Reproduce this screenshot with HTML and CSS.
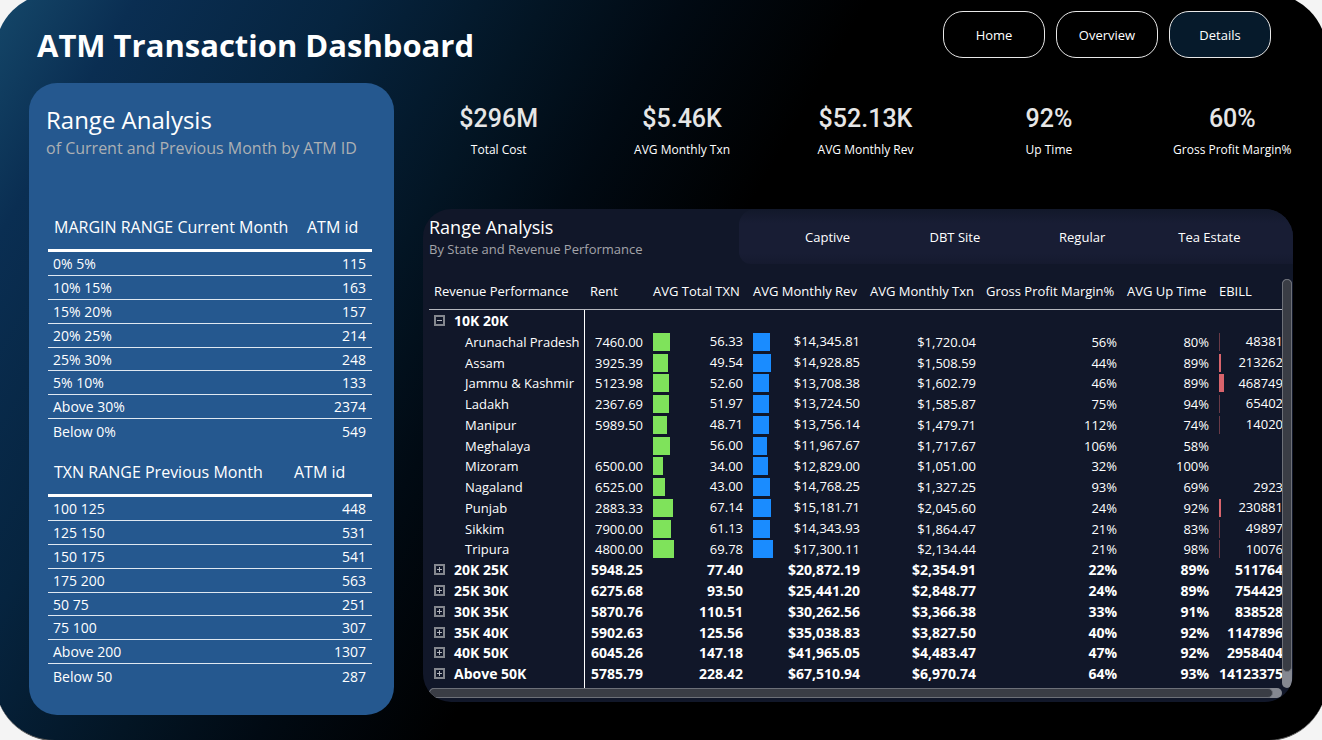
FILE: index.html
```html
<!DOCTYPE html>
<html lang="en">
<head>
<meta charset="utf-8">
<meta name="viewport" content="width=device-width, initial-scale=1">
<title>ATM Transaction Dashboard</title>
<link rel="stylesheet" href="styles.css">
</head>
<body>
<svg class="sprite" aria-hidden="true">
  <symbol id="plus" viewBox="0 0 11 11"><path d="M1 1h9v9H1z" fill="none" stroke="currentColor" stroke-width="2"/><path d="M3 5.500h5M5.500 3v5" fill="none" stroke="#b4b6bd"/></symbol>
  <symbol id="minus" viewBox="0 0 11 11"><path d="M1 1h9v9H1z" fill="none" stroke="currentColor" stroke-width="2"/><path d="M3 5.500h5" fill="none" stroke="#b4b6bd"/></symbol>
</svg>
<div class="board">
  <header class="top">
    <h1>ATM Transaction Dashboard</h1>
    <nav class="tabs">
      <button type="button" class="tab">Home</button>
      <button type="button" class="tab">Overview</button>
      <button type="button" class="tab tab-active">Details</button>
    </nav>
  </header>
  <main class="content">
    <section class="side">
      <h2>Range Analysis</h2>
      <p class="sub">of Current and Previous Month by ATM ID</p>
      <table class="ranges">
        <colgroup><col class="w-range"><col></colgroup>
        <thead><tr><th>MARGIN RANGE Current Month</th><th>ATM id</th></tr></thead>
        <tbody>
          <tr><td>0% 5%</td><td>115</td></tr>
          <tr><td>10% 15%</td><td>163</td></tr>
          <tr><td>15% 20%</td><td>157</td></tr>
          <tr><td>20% 25%</td><td>214</td></tr>
          <tr><td>25% 30%</td><td>248</td></tr>
          <tr><td>5% 10%</td><td>133</td></tr>
          <tr><td>Above 30%</td><td>2374</td></tr>
          <tr><td>Below 0%</td><td>549</td></tr>
        </tbody>
      </table>
      <table class="ranges">
        <colgroup><col class="w-txn"><col></colgroup>
        <thead><tr><th>TXN RANGE Previous Month</th><th>ATM id</th></tr></thead>
        <tbody>
          <tr><td>100 125</td><td>448</td></tr>
          <tr><td>125 150</td><td>531</td></tr>
          <tr><td>150 175</td><td>541</td></tr>
          <tr><td>175 200</td><td>563</td></tr>
          <tr><td>50 75</td><td>251</td></tr>
          <tr><td>75 100</td><td>307</td></tr>
          <tr><td>Above 200</td><td>1307</td></tr>
          <tr><td>Below 50</td><td>287</td></tr>
        </tbody>
      </table>
    </section>
    <div class="detail">
      <dl class="kpis">
        <div><dd>$296M</dd><dt>Total Cost</dt></div>
        <div><dd>$5.46K</dd><dt>AVG Monthly Txn</dt></div>
        <div><dd>$52.13K</dd><dt>AVG Monthly Rev</dt></div>
        <div><dd>92%</dd><dt>Up Time</dt></div>
        <div><dd>60%</dd><dt>Gross Profit Margin%</dt></div>
      </dl>
      <section class="panel">
        <div class="panel-head">
          <div class="panel-title">
            <h2>Range Analysis</h2>
            <p class="sub">By State and Revenue Performance</p>
          </div>
          <div class="slicer">
            <button type="button">Captive</button>
            <button type="button">DBT Site</button>
            <button type="button">Regular</button>
            <button type="button">Tea Estate</button>
          </div>
        </div>
        <div class="scroller">
          <div class="view">
            <table class="matrix">
              <colgroup><col class="c-name"><col class="c-rent"><col class="c-total"><col class="c-rev"><col class="c-txn"><col class="c-margin"><col class="c-up"><col class="c-bill"></colgroup>
              <thead><tr><th>Revenue Performance</th><th>Rent</th><th>AVG Total TXN</th><th>AVG Monthly Rev</th><th>AVG Monthly Txn</th><th>Gross Profit Margin%</th><th>AVG Up Time</th><th>EBILL</th></tr></thead>
              <tbody>
                <tr class="group"><th><button type="button" aria-label="Collapse"><svg><use href="#minus"/></svg></button>10K 20K</th><td></td><td></td><td></td><td></td><td></td><td></td><td></td></tr>
                <tr><th>Arunachal Pradesh</th><td>7460.00</td><td><div class="cell"><i class="bar green" style="width:17px"></i>56.33</div></td><td><div class="cell"><i class="bar blue" style="width:17px"></i>$14,345.81</div></td><td>$1,720.04</td><td>56%</td><td>80%</td><td><div class="cell"><i class="bar red low" style="width:1px"></i>48381</div></td></tr>
                <tr><th>Assam</th><td>3925.39</td><td><div class="cell"><i class="bar green" style="width:15px"></i>49.54</div></td><td><div class="cell"><i class="bar blue" style="width:18px"></i>$14,928.85</div></td><td>$1,508.59</td><td>44%</td><td>89%</td><td><div class="cell"><i class="bar red" style="width:2px"></i>213262</div></td></tr>
                <tr><th>Jammu &amp; Kashmir</th><td>5123.98</td><td><div class="cell"><i class="bar green" style="width:16px"></i>52.60</div></td><td><div class="cell"><i class="bar blue" style="width:16px"></i>$13,708.38</div></td><td>$1,602.79</td><td>46%</td><td>89%</td><td><div class="cell"><i class="bar red" style="width:5px"></i>468749</div></td></tr>
                <tr><th>Ladakh</th><td>2367.69</td><td><div class="cell"><i class="bar green" style="width:16px"></i>51.97</div></td><td><div class="cell"><i class="bar blue" style="width:16px"></i>$13,724.50</div></td><td>$1,585.87</td><td>75%</td><td>94%</td><td><div class="cell"><i class="bar red low" style="width:1px"></i>65402</div></td></tr>
                <tr><th>Manipur</th><td>5989.50</td><td><div class="cell"><i class="bar green" style="width:14px"></i>48.71</div></td><td><div class="cell"><i class="bar blue" style="width:16px"></i>$13,756.14</div></td><td>$1,479.71</td><td>112%</td><td>74%</td><td><div class="cell"><i class="bar red low" style="width:1px"></i>14020</div></td></tr>
                <tr><th>Meghalaya</th><td></td><td><div class="cell"><i class="bar green" style="width:17px"></i>56.00</div></td><td><div class="cell"><i class="bar blue" style="width:14px"></i>$11,967.67</div></td><td>$1,717.67</td><td>106%</td><td>58%</td><td></td></tr>
                <tr><th>Mizoram</th><td>6500.00</td><td><div class="cell"><i class="bar green" style="width:10px"></i>34.00</div></td><td><div class="cell"><i class="bar blue" style="width:15px"></i>$12,829.00</div></td><td>$1,051.00</td><td>32%</td><td>100%</td><td></td></tr>
                <tr><th>Nagaland</th><td>6525.00</td><td><div class="cell"><i class="bar green" style="width:12px"></i>43.00</div></td><td><div class="cell"><i class="bar blue" style="width:17px"></i>$14,768.25</div></td><td>$1,327.25</td><td>93%</td><td>69%</td><td>2923</td></tr>
                <tr><th>Punjab</th><td>2883.33</td><td><div class="cell"><i class="bar green" style="width:20px"></i>67.14</div></td><td><div class="cell"><i class="bar blue" style="width:18px"></i>$15,181.71</div></td><td>$2,045.60</td><td>24%</td><td>92%</td><td><div class="cell"><i class="bar red" style="width:2px"></i>230881</div></td></tr>
                <tr><th>Sikkim</th><td>7900.00</td><td><div class="cell"><i class="bar green" style="width:18px"></i>61.13</div></td><td><div class="cell"><i class="bar blue" style="width:17px"></i>$14,343.93</div></td><td>$1,864.47</td><td>21%</td><td>83%</td><td><div class="cell"><i class="bar red low" style="width:1px"></i>49897</div></td></tr>
                <tr><th>Tripura</th><td>4800.00</td><td><div class="cell"><i class="bar green" style="width:21px"></i>69.78</div></td><td><div class="cell"><i class="bar blue" style="width:20px"></i>$17,300.11</div></td><td>$2,134.44</td><td>21%</td><td>98%</td><td><div class="cell"><i class="bar red low" style="width:1px"></i>10076</div></td></tr>
                <tr class="group"><th><button type="button" aria-label="Expand"><svg><use href="#plus"/></svg></button>20K 25K</th><td>5948.25</td><td>77.40</td><td>$20,872.19</td><td>$2,354.91</td><td>22%</td><td>89%</td><td>511764</td></tr>
                <tr class="group"><th><button type="button" aria-label="Expand"><svg><use href="#plus"/></svg></button>25K 30K</th><td>6275.68</td><td>93.50</td><td>$25,441.20</td><td>$2,848.77</td><td>24%</td><td>89%</td><td>754429</td></tr>
                <tr class="group"><th><button type="button" aria-label="Expand"><svg><use href="#plus"/></svg></button>30K 35K</th><td>5870.76</td><td>110.51</td><td>$30,262.56</td><td>$3,366.38</td><td>33%</td><td>91%</td><td>838528</td></tr>
                <tr class="group"><th><button type="button" aria-label="Expand"><svg><use href="#plus"/></svg></button>35K 40K</th><td>5902.63</td><td>125.56</td><td>$35,038.83</td><td>$3,827.50</td><td>40%</td><td>92%</td><td>1147896</td></tr>
                <tr class="group"><th><button type="button" aria-label="Expand"><svg><use href="#plus"/></svg></button>40K 50K</th><td>6045.26</td><td>147.18</td><td>$41,965.05</td><td>$4,483.47</td><td>47%</td><td>92%</td><td>2958404</td></tr>
                <tr class="group"><th><button type="button" aria-label="Expand"><svg><use href="#plus"/></svg></button>Above 50K</th><td>5785.79</td><td>228.42</td><td>$67,510.94</td><td>$6,970.74</td><td>64%</td><td>93%</td><td>14123375</td></tr>
                <tr class="tail"><th></th><td></td><td></td><td></td><td></td><td></td><td></td><td></td></tr>
              </tbody>
            </table>
          </div>
          <div class="rail rail-y"><div class="thumb"></div></div>
          <div class="rail rail-x"><div class="thumb"></div></div>
        </div>
      </section>
    </div>
  </main>
</div>
</body>
</html>
```

FILE: styles.css
```css
* { box-sizing: border-box; }

body {
  margin: 0;
  overflow: hidden;
  background: #f4f4f4;
  color: #fff;
  font-family: "Open Sans", "Noto Sans", sans-serif;
  font-size: 13px;
}

h1, h2, p, dl, dd { margin: 0; }

button {
  padding: 0;
  border: 0;
  background: none;
  color: inherit;
  font: inherit;
  cursor: pointer;
}

.sprite { display: none; }

/* The board bleeds slightly past the window on three sides. */
.board {
  margin: -7px -5px 0;
  padding: 18px 34px 25px;
  border-bottom: 1px solid #555;
  border-radius: 60px;
  background: linear-gradient(120deg, #15486a 0, #0a2e52 125px, #06243f 310px, #031524 480px, #010a13 600px, #000 760px);
}

.top {
  display: flex;
  justify-content: space-between;
  height: 72px;
  padding: 0 22px 0 8px;
}

h1 {
  padding-top: 12px;
  font-size: 31px;
  line-height: 44px;
}

.tabs { display: flex; gap: 11px; }

.tab {
  width: 102px;
  height: 47px;
  border: 1px solid #e8e8e8;
  border-radius: 20px;
}

.tab-active { background: #061a2b; }

.content {
  display: grid;
  grid-template-columns: 365fr 870fr;
  gap: 29px;
}

.side {
  padding: 22px 22px 26px 19px;
  border-radius: 28px;
  background: #25588f;
}

h2 { font-weight: 400; }

.sub { color: #acb0b4; }

.side h2 { margin-left: -2px; font-size: 24px; line-height: 30px; }

.side .sub {
  margin: 0 0 43px -2px;
  font-size: 16px;
  line-height: 26px;
  white-space: nowrap;
}

table {
  width: 100%;
  table-layout: fixed;
  border-collapse: separate;
  border-spacing: 0;
}

th, td { padding: 0; font-weight: 400; text-align: left; white-space: nowrap; }

.w-range { width: 246px; }
.w-txn { width: 233px; }

.ranges { font-size: 14px; }

.ranges th {
  height: 48px;
  padding: 0 0 0 6px;
  border-bottom: 3px solid #fff;
  font-size: 16px;
}

.ranges th + th { padding-left: 13px; }

.ranges td {
  height: 24px;
  padding: 0 6px 0 5px;
  border-bottom: 1px solid #dfe8f1;
}

.ranges td + td { text-align: right; }

.ranges tr:nth-child(5) td { height: 23px; }

.ranges tr:last-child td { height: 25px; border-bottom: 0; }

.ranges + .ranges { margin-top: 5px; }

.detail { min-width: 0; }

.kpis {
  display: grid;
  grid-template-columns: repeat(5, 1fr);
  margin: 20px -31px 46px -16px;
  text-align: center;
}

.kpis > div { display: flex; flex-direction: column; }

.kpis dd {
  color: #e6e6e6;
  font: 500 25px/32px Roboto, sans-serif;
}

.kpis dt { font-size: 12px; line-height: 26px; margin-top: 2px; }

.panel {
  padding-bottom: 4px;
  border-radius: 28px;
  background: #111729;
  overflow: hidden;
}

.panel-head {
  display: grid;
  grid-template-columns: 316fr 554fr;
  height: 55px;
  margin-bottom: 15px;
}

.panel-title { padding: 6px 0 0 6px; }

.panel h2 { font-size: 18px; line-height: 24px; }

.panel .sub { color: #a3a4a9; line-height: 20px; }

.slicer {
  display: flex;
  padding: 0 20px 0 25px;
  border-radius: 16px 0 0 12px;
  background: linear-gradient(#12182a, #181d34 14px, #181d34 44px, #151a2f);
}

.slicer button { flex: 1; }

.scroller {
  display: grid;
  grid-template-columns: 1fr 10px;
  grid-template-rows: 1fr 10px;
  padding: 0 1px 0 6px;
}

.view { min-width: 0; overflow: hidden; }

.c-name { width: 156px; }
.c-rent { width: 63px; }
.c-total { width: 100px; }
.c-rev { width: 117px; }
.c-txn { width: 116px; }
.c-margin { width: 141px; }
.c-up { width: 92px; }
.c-bill { width: 69px; }

.matrix thead th {
  height: 31px;
  padding: 0 0 7px 5px;
  border-bottom: 1px solid #b5b7be;
}

.matrix td { height: 21px; padding: 0 5px; text-align: right; }

.matrix tr:nth-child(4n) td { height: 20px; }

.matrix td:last-child { padding-right: 0; }

.matrix tbody th {
  padding-left: 36px;
  border-right: 1px solid #fff;
}

.matrix .group > * { font-size: 14px; font-weight: 700; line-height: 19px; }

.matrix .group th { padding-left: 5px; }

.matrix .group button {
  display: inline-block;
  margin-right: 9px;
  color: #85888f;
  line-height: 0;
}

.group svg { width: 11px; height: 11px; }

.matrix .tail td { height: 4px; }

.cell {
  display: flex;
  align-items: center;
  justify-content: space-between;
  line-height: 19px;
}

.bar { height: 18px; }
.green { background: #7fe35b; }
.blue { background: #1a8cff; }
.red { background: #d9646c; }
.low { background: #6a3a47; }

.rail { background: #858891; border-radius: 5px; }

.rail-x { grid-row: 2; }

.thumb {
  border: 1px solid #6d7078;
  border-radius: 5px;
  background: #3a3d45;
}

.rail-y .thumb { width: 10px; height: 96%; }
.rail-x .thumb { width: 99%; height: 10px; }
```
